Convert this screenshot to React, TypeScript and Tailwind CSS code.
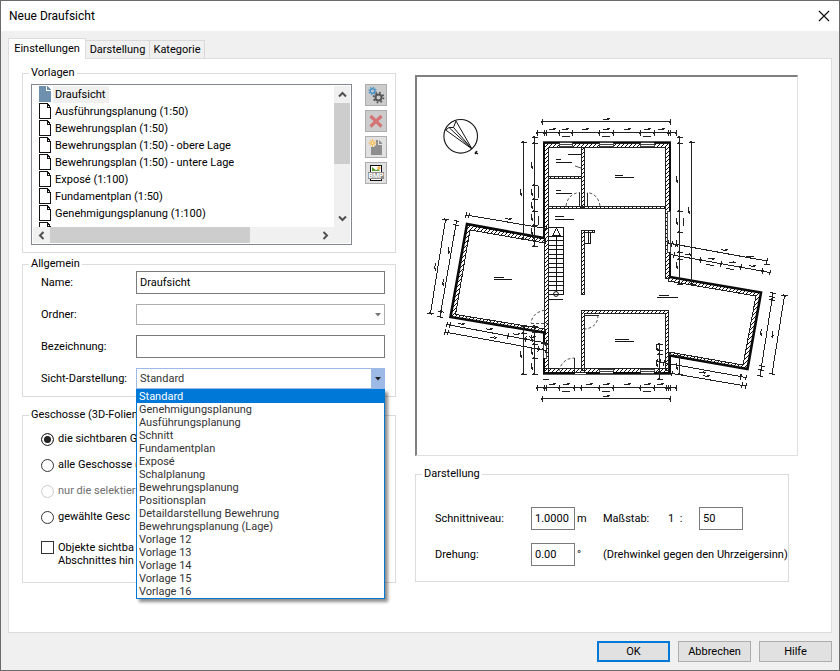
import React, { useState } from 'react';

const TEMPLATES = [
  'Draufsicht',
  'Ausführungsplanung (1:50)',
  'Bewehrungsplan (1:50)',
  'Bewehrungsplan (1:50) - obere Lage',
  'Bewehrungsplan (1:50) - untere Lage',
  'Exposé (1:100)',
  'Fundamentplan (1:50)',
  'Genehmigungsplanung (1:100)',
];

const VIEW_STYLES = [
  'Standard',
  'Genehmigungsplanung',
  'Ausführungsplanung',
  'Schnitt',
  'Fundamentplan',
  'Exposé',
  'Schalplanung',
  'Bewehrungsplanung',
  'Positionsplan',
  'Detaildarstellung Bewehrung',
  'Bewehrungsplanung (Lage)',
  'Vorlage 12',
  'Vorlage 13',
  'Vorlage 14',
  'Vorlage 15',
  'Vorlage 16',
];

const STOREY_OPTIONS = [
  { id: 'visible', label: 'die sichtbaren G', disabled: false },
  { id: 'all', label: 'alle Geschosse (', disabled: false },
  { id: 'selected', label: 'nur die selektier', disabled: true },
  { id: 'chosen', label: 'gewählte Gesc', disabled: false },
];

const INPUT = 'h-[23px] w-full min-w-0 border border-[#7a7a7a] bg-white px-[3px] outline-none';

const Group: React.FC<{ title: string; className?: string; children: React.ReactNode }> = ({
  title,
  className = '',
  children,
}) => (
  <fieldset className={`min-w-0 border border-[#dcdcdc] ${className}`}>
    <legend className="ml-[6px] px-[2px] leading-[14px] whitespace-nowrap">{title}</legend>
    {children}
  </fieldset>
);

const Chevron: React.FC<{ d: string }> = ({ d }) => (
  <svg width="9" height="9" viewBox="0 0 9 9" fill="none" stroke="#505050" strokeWidth="2">
    <path d={d} />
  </svg>
);

const PageIcon: React.FC<{ filled?: boolean }> = ({ filled }) => (
  <svg width="13" height="16" viewBox="0 0 13 16" className="shrink-0" shapeRendering="crispEdges">
    {filled ? (
      <>
        <path d="M0 0H7V5H12V16H0Z" fill="#6f8fae" />
        <path d="M8 0L12 4H8Z" fill="#6f8fae" />
      </>
    ) : (
      <path d="M0.5 0.5H8.5L11.5 4.5V15.5H0.5ZM8.5 0.5V4.5H11.5" fill="#fff" stroke="#111" />
    )}
  </svg>
);

const GearsIcon = () => (
  <svg width="18" height="18" viewBox="0 0 18 18" fill="none">
    <circle cx="5.5" cy="5" r="2.2" stroke="#4b93c8" strokeWidth="1.5" />
    <circle cx="5.5" cy="5" r="3.5" stroke="#4b93c8" strokeWidth="1.4" strokeDasharray="1.3 1.45" />
    <circle cx="11.5" cy="11.5" r="3" stroke="#555" strokeWidth="2" />
    <circle cx="11.5" cy="11.5" r="4.9" stroke="#555" strokeWidth="1.8" strokeDasharray="1.7 2.15" />
  </svg>
);

const DeleteIcon = () => (
  <svg width="18" height="18" viewBox="0 0 18 18" stroke="#d57476" strokeWidth="3.2" fill="none">
    <path d="M3.5 4L14.5 14.5M14.5 4L3.5 14.5" />
  </svg>
);

const NewIcon = () => (
  <svg width="18" height="18" viewBox="0 0 18 18">
    <path d="M4 9H7L9 7V2H11V7H15V17H4Z" fill="#8e8e8e" />
    <path d="M12 2L15 5V6H12Z" fill="#8e8e8e" />
    <path d="M5.5 1V9M1.5 5H9.5M2.7 2.2L8.3 7.8M8.3 2.2L2.7 7.8" stroke="#f5bb52" strokeWidth="1" />
    <circle cx="5.5" cy="5" r="1.5" fill="#ffe9b8" stroke="#f5bb52" />
  </svg>
);

const BmpIcon = () => (
  <svg width="18" height="18" viewBox="0 0 18 18">
    <rect x="3.5" y="1.5" width="11" height="15" fill="#fff" stroke="#111" />
    <path d="M5 3V7H10Z" fill="#5aa02c" />
    <path d="M8 7L11 5L13 7Z" fill="#5aa02c" />
    <circle cx="12" cy="4" r="1.7" fill="#f5b04a" />
    <rect x="1" y="8" width="16" height="7" fill="#8d8d8d" />
    <text x="9" y="14" fontSize="7" fontWeight="700" textAnchor="middle" fill="#fff">
      BMP
    </text>
  </svg>
);

const TOOLS = [
  { label: 'Einstellungen', icon: <GearsIcon />, tone: 'bg-[#cccccc]' },
  { label: 'Löschen', icon: <DeleteIcon />, tone: 'bg-[#cccccc]' },
  { label: 'Neu', icon: <NewIcon />, tone: 'bg-[#e1e1e1]' },
  { label: 'Bitmap', icon: <BmpIcon />, tone: 'bg-[#e1e1e1]' },
];

type DimProps = { from: [number, number]; to: [number, number]; ticks?: number[]; labels?: number[]; side?: number };

// dimension line, ticks and labels are distances along the line
const Dim: React.FC<DimProps> = ({ from, to, ticks = [], labels = [], side = -3 }) => {
  const dx = to[0] - from[0];
  const dy = to[1] - from[1];
  const length = Math.hypot(dx, dy);
  const angle = (Math.atan2(dy, dx) * 180) / Math.PI;
  return (
    <g transform={`translate(${from[0]} ${from[1]}) rotate(${angle})`}>
      <path d={`M0 0H${length}`} />
      {[0, length, ...ticks].map((t, i) => (
        <path key={i} d={`M${t} -3V3M${t - 1} 1L${t + 1} -1`} />
      ))}
      {labels.map((t, i) => (
        <path key={i} d={`M${t - 3} ${side}H${t + 3}M${t + 1} ${side - 1}H${t + 4}`} />
      ))}
    </g>
  );
};

const ROOM_LABELS = [
  'M568 154.5H581M556 159.5H561M556 162.5H572',
  'M556 190.5H561M556 193.5H572',
  'M555 216.5H564M555 219.5H574',
  'M615 175.5H623M615 177.5H634',
  'M494 277.5H504M494 279.5H512',
  'M659 295.5H669M657 297.5H678',
  'M615 339.5H629M615 341.5H634',
  'M549 299.5H563',
].join('');

const STEPS = Array.from({ length: 14 }, (_, i) => `M549 ${236 + i * 4.5}H564`).join('');

const FloorPlan = () => (
  <svg
    viewBox="417 77 380 378"
    className="block h-full w-full"
    fill="none"
    stroke="#161616"
    strokeWidth="1"
    role="img"
    aria-label="Grundriss"
    shapeRendering="crispEdges"
  >
    <defs>
      <pattern id="hatch" width="4" height="4" patternUnits="userSpaceOnUse">
        <path d="M-1 5L5 -1" stroke="#111" strokeWidth="1" />
      </pattern>
    </defs>

    {/* north arrow */}
    <g shapeRendering="auto">
      <circle cx="460.7" cy="136.3" r="16.8" strokeWidth="1.1" />
      <path d="M445.7 130L472 149L456 121M445.7 130L449 127.5L453.5 127.5L456 121M449 127.5L472 149L453.5 127.5" />
      <path d="M475 152L478 154M475 154L477 151" strokeWidth="1.4" />
    </g>

    {/* hatched walls */}
    <g fill="url(#hatch)" stroke="#222">
      <path d="M544.5 143.5H669.5V278.5H665.5V147.5H548.5V372.5H544.5Z" />
      <path d="M581.5 147.5H584.5V207.5H581.5ZM548.5 176.5H581.5V178.5H548.5ZM548.5 206.5H665.5V208.5H548.5Z" />
      <path d="M581.5 230.5H594.5V232.5H584.5V294.5H581.5Z" />
      <path d="M581.5 310.5H668.5V370.5H665.5V313.5H584.5V370.5H581.5Z" />
      <path d="M544.5 368.5H669.5V372.5H544.5Z" />
      <path d="M467 225L545 239V243L470 230L455.5 314.5L545 329V333L451 317Z" />
      <path d="M668 277L761 293L747 369L669 356V352L743 365L756 296L668 281Z" />
    </g>

    {/* window openings */}
    <g fill="#fff" stroke="#444">
      <path d="M559.5 142.5H572.5V146.5H559.5ZM599.5 142.5H613.5V146.5H599.5ZM640.5 142.5H654.5V146.5H640.5Z" />
      <path d="M599.5 369.5H613.5V373.5H599.5ZM640.5 369.5H654.5V373.5H640.5Z" />
      <path d="M667.5 211.5H670.5V252.5H667.5ZM543.5 344.5H546.5V358.5H543.5Z" />
      <path d="M559.5 144.5H572.5M599.5 144.5H613.5M640.5 144.5H654.5M599.5 371.5H613.5M640.5 371.5H654.5" />
    </g>

    {/* outer shell */}
    <g strokeWidth="2" stroke="#0a0a0a">
      <path d="M544 238V142H560M572 142H600M613 142H641M654 142H670V211M670 252V277" />
      <path d="M544 332V343M544 358V373H575M586 373H600M613 373H641M654 373H670V355" />
      <path d="M544 238L467 224L450.5 317L544 332.5" strokeWidth="2.6" shapeRendering="auto" />
      <path d="M670 277L761 292.5L747.5 369L670 355.5" strokeWidth="2.6" shapeRendering="auto" />
    </g>
    <path d="M543 141.5H671M543 374.5H671" stroke="#555" />

    {/* stairs */}
    <path d={`M548.5 227.5H563.5V294.5M556.5 235V292M553 235H560L556.5 228Z${STEPS}`} />
    <circle cx="556" cy="294" r="2.4" shapeRendering="auto" />
    <path d="M590.5 233V243.5H585M588.5 233V243" />

    {/* doors */}
    <g shapeRendering="auto" stroke="#555">
      <path d="M566 206C567 198 572 193 580 192.5M600 206C599 198 594 193 587 192.5" strokeDasharray="3 2" />
      <path d="M579.5 193V206M587.5 193V206M566 206.5H580M587 206.5H600" stroke="#222" />
      <path d="M545 310C536 312 532 316 531 323M531 323.5H548" strokeDasharray="3 2" />
      <path d="M559 371C561 363 566 358 574.5 358M598 315C598 323 594 328 585 329" strokeDasharray="3 2" />
      <path d="M574.5 358V372M585 315.5H599" stroke="#222" />
      <path d="M575 166L581 168" />
    </g>

    <path d={ROOM_LABELS} />

    {/* dimensions, main building */}
    <g stroke="#222">
      <Dim from={[542, 121.5]} to={[670, 121.5]} labels={[64]} side={-2} />
      <Dim
        from={[537, 132.5]}
        to={[676, 132.5]}
        ticks={[7, 9, 22, 35, 62, 76, 103, 117, 131, 133]}
        labels={[15, 28, 48, 69, 90, 110, 124]}
      />
      <path d="M562 136.5H570M602 136.5H610M643 136.5H651" />
      <Dim
        from={[537, 387.5]}
        to={[676, 387.5]}
        ticks={[7, 9, 22, 37, 44, 62, 76, 103, 117, 129, 131, 133]}
        labels={[15, 29, 52, 69, 90, 110, 123]}
      />
      <path d="M562 391.5H570M602 391.5H610M643 391.5H651M543 379.5H549" />
      <Dim from={[542, 398.5]} to={[670, 398.5]} labels={[64]} side={-2} />
      <Dim from={[523.5, 142]} to={[523.5, 239]} labels={[50]} side={3} />
      <Dim from={[534.5, 137]} to={[534.5, 246]} ticks={[6, 48, 62, 74, 88, 100]} labels={[28, 55, 68, 80, 94]} side={3} />
      <Dim from={[523.5, 326]} to={[523.5, 374]} ticks={[7]} labels={[28]} side={3} />
      <Dim from={[534.5, 326]} to={[534.5, 374]} ticks={[6, 18, 32]} labels={[12, 25, 40]} side={3} />
      <Dim from={[679.5, 137]} to={[679.5, 284]} ticks={[6, 74, 95, 115, 122]} labels={[42, 84, 106, 128]} side={3} />
      <Dim from={[691.5, 142]} to={[691.5, 284]} labels={[68]} side={3} />
      <Dim from={[659.5, 344]} to={[659.5, 379]} ticks={[6, 10, 28]} labels={[3, 19]} side={3} />
      <Dim from={[679.5, 356]} to={[679.5, 374]} labels={[10]} side={3} />
      <path d="M538.5 186V198M538.5 216V225M683.5 218V226M549 343H541M542 348L547 353" />
    </g>

    {/* dimensions, side wings */}
    <g stroke="#222">
      <Dim from={[466, 215]} to={[546, 228.5]} ticks={[3]} labels={[42]} />
      <Dim from={[445.5, 219.5]} to={[430.5, 313.5]} labels={[48]} side={3} />
      <Dim from={[456.5, 221]} to={[440, 317]} ticks={[4, 92]} labels={[30, 62]} side={3} />
      <Dim from={[447, 324.5]} to={[546, 343]} ticks={[3, 62, 80]} labels={[14, 42, 70, 86]} />
      <Dim from={[445, 332]} to={[546, 350.5]} ticks={[3, 95]} labels={[48]} />
      <Dim from={[668, 243]} to={[767, 261]} ticks={[4, 8]} labels={[56]} />
      <Dim from={[670, 254.5]} to={[770, 272.5]} ticks={[4, 31, 52, 72, 94]} labels={[18, 41, 62, 83]} />
      <path d="M706 264L714 266M726 268L734 270M746 256L754 257M764 264L770 265" />
      <Dim from={[773, 293]} to={[760, 376]} ticks={[4, 7, 74, 78]} labels={[40]} side={6} />
      <Dim from={[784.5, 295.5]} to={[772, 374]} labels={[40]} side={6} />
      <Dim from={[657, 361.5]} to={[746, 377.5]} ticks={[3, 7, 85]} labels={[46]} side={3} />
      <Dim from={[672, 373.5]} to={[746, 386]} ticks={[71]} labels={[34]} />
    </g>
  </svg>
);

const TemplateList: React.FC<{ selected: string; onSelect: (name: string) => void }> = ({ selected, onSelect }) => (
  <div className="min-w-0 flex-1 border border-[#828790] bg-white p-px">
    <div className="flex">
      <ul className="h-[141px] min-w-0 flex-1 overflow-hidden pl-[6px]">
        {TEMPLATES.map(name => (
          <li key={name} className="h-[17px]">
            <button type="button" className="flex gap-px" onClick={() => onSelect(name)}>
              <PageIcon filled={name === selected} />
              <span
                className={`pr-[4px] pl-[2px] leading-[17px] whitespace-nowrap ${name === selected ? 'bg-[#f0f0f0]' : ''}`}
              >
                {name}
              </span>
            </button>
          </li>
        ))}
        <li className="h-[17px]">
          <PageIcon />
        </li>
      </ul>
      <div className="flex w-[16px] flex-col items-center bg-[#f0f0f0]">
        <span className="flex h-[17px] items-center">
          <Chevron d="M1 6.5L4.5 3L8 6.5" />
        </span>
        <span className="h-[61px] w-full bg-[#cdcdcd]" />
        <span className="mt-auto flex h-[17px] items-center">
          <Chevron d="M1 2.5L4.5 6L8 2.5" />
        </span>
      </div>
    </div>
    <div className="flex h-[16px] items-center bg-[#f0f0f0] pr-[20px]">
      <span className="flex w-[17px] justify-center">
        <Chevron d="M6.5 1L3 4.5L6.5 8" />
      </span>
      <span className="h-full w-[200px] bg-[#cdcdcd]" />
      <span className="ml-auto">
        <Chevron d="M2.5 1L6 4.5L2.5 8" />
      </span>
    </div>
  </div>
);

const Field: React.FC<{ id: string; label: string; children: React.ReactNode }> = ({ id, label, children }) => (
  <div className="flex items-center">
    <label htmlFor={id} className="w-[95px] shrink-0 whitespace-nowrap">
      {label}
    </label>
    <div className="relative min-w-0 flex-1">{children}</div>
  </div>
);

export default function App() {
  const [template, setTemplate] = useState('Draufsicht');
  const [viewStyle, setViewStyle] = useState('Standard');
  const [menuOpen, setMenuOpen] = useState(true);
  const [storey, setStorey] = useState('visible');

  const chooseStyle = (name: string) => {
    setViewStyle(name);
    setMenuOpen(false);
  };

  return (
    <div className="flex min-h-screen flex-col border border-[#6b6b6b] bg-[#f0f0f0] font-[Roboto,'Liberation_Sans',sans-serif] text-[11px] leading-[14px] text-black">
      <header className="flex h-[30px] items-center justify-between bg-white pr-[9px] pl-[8px]">
        <h1 className="text-[12px]">Neue Draufsicht</h1>
        <button type="button" aria-label="Schließen">
          <svg width="12" height="12" viewBox="0 0 12 12" stroke="#111" strokeWidth="1.2">
            <path d="M1 1L11 11M11 1L1 11" />
          </svg>
        </button>
      </header>

      <main className="flex flex-1 flex-col px-[7px] pt-[7px]">
        <div role="tablist" className="flex items-end">
          <button type="button" role="tab" aria-selected="true" className="relative -mb-px h-[21px] w-[78px] border border-b-0 border-[#dcdcdc] bg-white">
            Einstellungen
          </button>
          <button type="button" role="tab" aria-selected="false" className="h-[18px] w-[64px] border-t border-r border-[#d9d9d9]">
            Darstellung
          </button>
          <button type="button" role="tab" aria-selected="false" className="h-[18px] w-[55px] border-t border-r border-[#d9d9d9]">
            Kategorie
          </button>
        </div>

        <div className="grid flex-1 grid-cols-[374fr_383fr] items-start gap-[19px] border border-[#dcdcdc] bg-white pt-[7px] pr-[33px] pl-[13px]">
          <div className="flex min-w-0 flex-col">
            <Group title="Vorlagen" className="mb-[4px]">
              <div className="flex gap-[13px] pt-[4px] pr-[8px] pb-[7px] pl-[8px]">
                <TemplateList selected={template} onSelect={setTemplate} />
                <div className="flex flex-col gap-[4px]">
                  {TOOLS.map(tool => (
                    <button
                      key={tool.label}
                      type="button"
                      aria-label={tool.label}
                      className={`flex h-[22px] w-[22px] items-center justify-center border border-[#adadad] ${tool.tone}`}
                    >
                      {tool.icon}
                    </button>
                  ))}
                </div>
              </div>
            </Group>

            <Group title="Allgemein" className="mb-[11px]">
              <div className="flex flex-col gap-[10px] pr-[10px] pb-[7px] pl-[18px]">
                <Field id="name" label="Name:">
                  <input id="name" defaultValue="Draufsicht" className={INPUT} />
                </Field>
                <Field id="folder" label="Ordner:">
                  <select id="folder" className="block h-[21px] w-full appearance-none border border-[#adadad] bg-white px-[3px]">
                    <option value="" />
                  </select>
                  <svg width="6" height="4" viewBox="0 0 6 4" className="pointer-events-none absolute top-[9px] right-[4px]">
                    <path d="M0 0H6L3 3.5Z" fill="#777" />
                  </svg>
                </Field>
                <Field id="description" label="Bezeichnung:">
                  <input id="description" className={INPUT} />
                </Field>
                <Field id="viewStyle" label="Sicht-Darstellung:">
                  <select
                    id="viewStyle"
                    value={viewStyle}
                    onChange={e => setViewStyle(e.target.value)}
                    onClick={() => setMenuOpen(!menuOpen)}
                    className="block h-[21px] w-full appearance-none border border-[#9db9e6] bg-white px-[3px] text-[#333] outline-none"
                  >
                    {VIEW_STYLES.map(name => (
                      <option key={name}>{name}</option>
                    ))}
                  </select>
                  <span className="pointer-events-none absolute top-0 right-0 flex h-[21px] w-[14px] items-center justify-center bg-[#9db9e6]">
                    <svg width="6" height="4" viewBox="0 0 6 4">
                      <path d="M0 0H6L3 3.5Z" fill="#222" />
                    </svg>
                  </span>
                  {menuOpen && (
                    <ul
                      role="listbox"
                      aria-label="Sicht-Darstellung"
                      className="absolute top-full right-0 left-0 z-10 border border-[#0078d7] bg-white shadow-[3px_3px_3px_rgba(0,0,0,0.45)]"
                    >
                      {VIEW_STYLES.map(name => (
                        <li
                          key={name}
                          role="option"
                          aria-selected={name === viewStyle}
                          onClick={() => chooseStyle(name)}
                          className={`h-[13px] px-[2px] leading-[13px] ${name === viewStyle ? 'bg-[#0078d7] text-white' : 'text-[#333]'}`}
                        >
                          {name}
                        </li>
                      ))}
                    </ul>
                  )}
                </Field>
              </div>
            </Group>

            <Group title="Geschosse (3D-Folien">
              <div className="pt-[4px] pb-[15px] pl-[18px]">
                {STOREY_OPTIONS.map(option => (
                  <label
                    key={option.id}
                    className={`flex h-[26px] items-center gap-[4px] whitespace-nowrap ${option.disabled ? 'text-[#6d6d6d]' : ''}`}
                  >
                    <input
                      type="radio"
                      name="storey"
                      checked={storey === option.id}
                      disabled={option.disabled}
                      onChange={() => setStorey(option.id)}
                      className="h-[13px] w-[13px] appearance-none rounded-full border border-[#333] bg-white checked:bg-[#222] checked:shadow-[inset_0_0_0_2px_white] disabled:border-[#cccccc]"
                    />
                    {option.label}
                  </label>
                ))}
                <label className="mt-[11px] flex items-start gap-[4px] leading-[13px] whitespace-nowrap">
                  <input type="checkbox" className="h-[13px] w-[13px] appearance-none border border-[#333] bg-white checked:bg-[#333]" />
                  <span>
                    Objekte sichtba
                    <br />
                    Abschnittes hin
                  </span>
                </label>
              </div>
            </Group>
          </div>

          <div className="flex min-w-0 flex-col pt-[9px]">
            <div className="mb-[11px] aspect-[383/381] border-t-2 border-r border-b border-l-2 border-t-[#808080] border-r-[#e0e0e0] border-b-[#e0e0e0] border-l-[#808080]">
              <FloorPlan />
            </div>

            <Group title="Darstellung" className="mr-[9px]">
              <div className="grid grid-cols-[96px_44px_28px_1fr] items-center gap-y-[13px] pt-[26px] pb-[15px] pl-[19px] whitespace-nowrap">
                <label htmlFor="level">Schnittniveau:</label>
                <input id="level" defaultValue="1.0000" className={INPUT} />
                <span className="pl-[2px]">m</span>
                <div className="flex items-center">
                  <label htmlFor="scale" className="w-[65px]">
                    Maßstab:
                  </label>
                  <span className="w-[31px]">1&nbsp; :</span>
                  <div className="w-[44px]">
                    <input id="scale" defaultValue="50" className={INPUT} />
                  </div>
                </div>
                <label htmlFor="rotation">Drehung:</label>
                <input id="rotation" defaultValue="0.00" className={INPUT} />
                <span className="pl-[2px]">°</span>
                <span>(Drehwinkel gegen den Uhrzeigersinn)</span>
              </div>
            </Group>
          </div>
        </div>

        <footer className="flex justify-end gap-[8px] py-[8px]">
          <button type="button" className="h-[21px] w-[73px] border-2 border-[#0078d7] bg-[#e1e1e1] leading-none">
            OK
          </button>
          <button type="button" className="h-[21px] w-[73px] border border-[#adadad] bg-[#e1e1e1] leading-none">
            Abbrechen
          </button>
          <button type="button" className="h-[21px] w-[73px] border border-[#adadad] bg-[#e1e1e1] leading-none">
            Hilfe
          </button>
        </footer>
      </main>
    </div>
  );
}
